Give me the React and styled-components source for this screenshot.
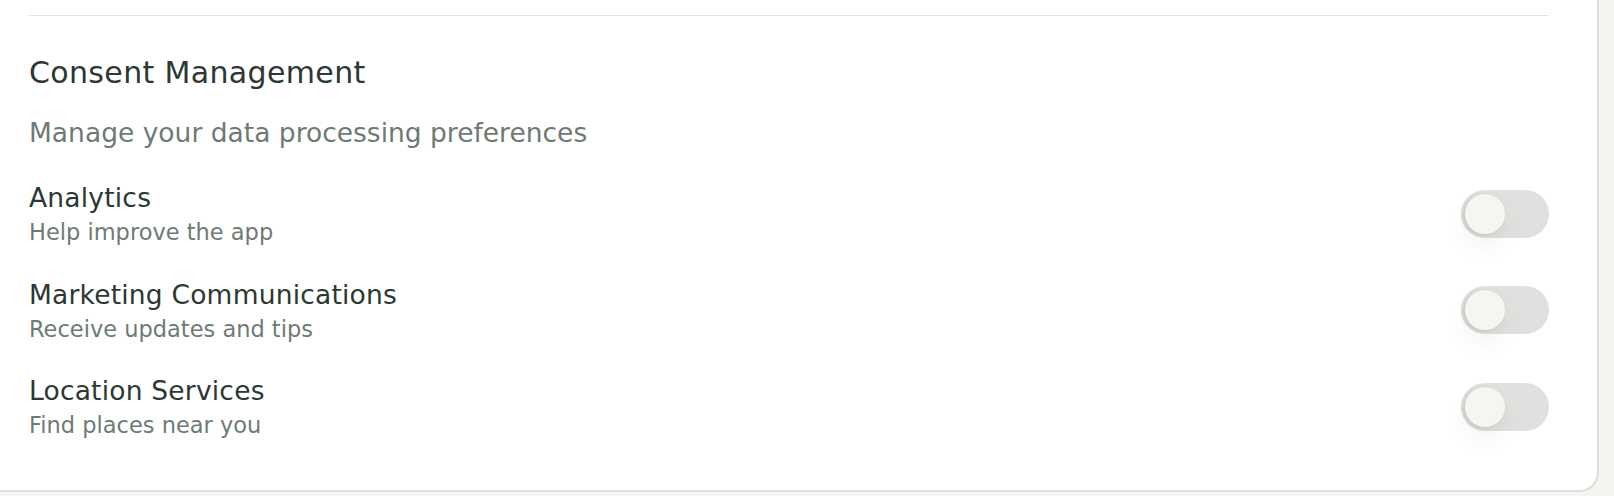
import React, { useState } from "react";
import styled, { createGlobalStyle } from "styled-components";

const GlobalStyle = createGlobalStyle`
  html, body {
    margin: 0;
    padding: 0;
    background: #f5f4f0;
    overflow: hidden;
  }
  body {
    font-family: "DejaVu Sans", "Open Sans", sans-serif;
    color: #2b3833;
  }
`;

const Page = styled.div`
  padding-bottom: 6px;
`;

const Card = styled.div`
  background: #fff;
  margin-left: -19px;
  width: 1616px;
  box-sizing: border-box;
  padding: 15px 48px 0;
  border-radius: 0 0 18px 18px;
  box-shadow: 1px 1px 0 1px #e0dfdb;
`;

const Section = styled.section`
  border-top: 1px solid #e3e3e1;
  padding: 39px 0 51px;
`;

const Title = styled.h2`
  margin: 0;
  font-size: 30px;
  line-height: 36px;
  font-weight: 400;
  letter-spacing: 0.35px;
  color: #2b3833;
`;

const Subtitle = styled.p`
  margin: 26px 0 0;
  font-size: 26.5px;
  line-height: 32px;
  color: #6e7b74;
`;

const List = styled.div`
  margin-top: 33px;
  display: flex;
  flex-direction: column;
  gap: 32.5px;
`;

const Row = styled.div`
  display: flex;
  align-items: center;
  justify-content: space-between;
`;

const Label = styled.div`
  font-size: 26.5px;
  line-height: 32px;
  letter-spacing: 0.2px;
  color: #2b3833;
`;

const Description = styled.div`
  margin-top: 5px;
  font-size: 22.5px;
  line-height: 27px;
  color: #6e7b74;
`;

const Track = styled.button`
  position: relative;
  flex: none;
  width: 88px;
  height: 48px;
  padding: 0;
  border: none;
  border-radius: 24px;
  background: ${(p) => (p.$on ? "#7f9a88" : "#e0e1de")};
  cursor: pointer;
  margin-top: -1px;
`;

const Knob = styled.span`
  position: absolute;
  top: 4px;
  left: ${(p) => (p.$on ? "44px" : "4px")};
  width: 40px;
  height: 40px;
  border-radius: 50%;
  background: #f5f6f1;
  box-shadow: -2px 1px 4px rgba(0, 0, 0, 0.1), 0 12px 24px rgba(0, 0, 0, 0.05);
  transition: left 0.2s;
`;

const items = [
  { key: "analytics", label: "Analytics", desc: "Help improve the app" },
  { key: "marketing", label: "Marketing Communications", desc: "Receive updates and tips" },
  { key: "location", label: "Location Services", desc: "Find places near you" },
];

const Toggle = ({ on, onClick }) => (
  <Track $on={on} onClick={onClick} aria-pressed={on}>
    <Knob $on={on} />
  </Track>
);

const App = () => {
  const [prefs, setPrefs] = useState({});

  return (
    <Page>
      <GlobalStyle />
      <Card>
        <Section>
          <Title>Consent Management</Title>
          <Subtitle>Manage your data processing preferences</Subtitle>
          <List>
            {items.map((item) => (
              <Row key={item.key}>
                <div>
                  <Label>{item.label}</Label>
                  <Description>{item.desc}</Description>
                </div>
                <Toggle
                  on={!!prefs[item.key]}
                  onClick={() => setPrefs({ ...prefs, [item.key]: !prefs[item.key] })}
                />
              </Row>
            ))}
          </List>
        </Section>
      </Card>
    </Page>
  );
};

export default App;
